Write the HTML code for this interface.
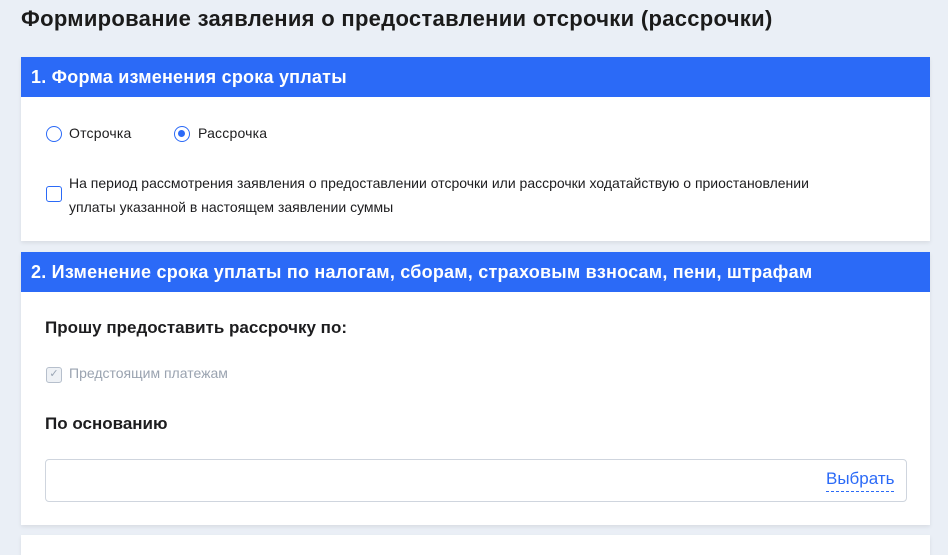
<!DOCTYPE html>
<html><head><meta charset="utf-8"><style>
body{margin:0;width:948px;height:542px;overflow:hidden;background:#eaeff6;font-family:"Liberation Sans",sans-serif;color:#1d1d1f;position:relative}
.t{position:absolute;left:21px;top:6px;font-size:22px;font-weight:bold;letter-spacing:0.3px;color:#1b1b1b}
.card{position:absolute;left:21px;width:909px;background:#fff;box-shadow:0 2px 4px rgba(0,0,0,0.08)}
.hd{background:#2b6af7;color:#fff;font-weight:bold;font-size:18px;height:40px;line-height:40px;padding-left:10px;letter-spacing:0.22px}
.a{position:absolute;font-size:14px}
.r{position:absolute;border:1.5px solid #2b6af7;border-radius:50%;box-sizing:border-box;width:16px;height:16px}
.cb{position:absolute;width:16px;height:16px;border:1.5px solid #2b6af7;border-radius:3px;box-sizing:border-box}
</style></head><body>
<div class="t">Формирование заявления о предоставлении отсрочки (рассрочки)</div>
<div class="card" style="top:57px;height:184px">
<div class="hd">1. Форма изменения срока уплаты</div>
<div class="r" style="left:25px;top:69px"></div>
<div class="a" style="left:48px;top:68px;letter-spacing:0.2px">Отсрочка</div>
<div class="r" style="left:153px;top:69px"><div style="position:absolute;left:3px;top:3px;width:7px;height:7px;border-radius:50%;background:#2b6af7"></div></div>
<div class="a" style="left:177px;top:68px;letter-spacing:0.2px">Рассрочка</div>
<div class="cb" style="left:25px;top:129px"></div>
<div class="a" style="left:48px;top:114px;font-size:14px;line-height:24px;width:785px">На период рассмотрения заявления о предоставлении отсрочки или рассрочки ходатайствую о приостановлении уплаты указанной в настоящем заявлении суммы</div>
</div>
<div class="card" style="top:252px;height:273px">
<div class="hd">2. Изменение срока уплаты по налогам, сборам, страховым взносам, пени, штрафам</div>
<div class="a" style="left:24px;top:66px;font-size:17px;font-weight:bold">Прошу предоставить рассрочку по:</div>
<div class="cb" style="left:25px;top:115px;border-color:#b6bfcc;background:#eef1f5;color:#9aa5b4;font-size:11px;line-height:12px;text-align:center">✓</div>
<div class="a" style="left:48px;top:113px;color:#9aa3b0">Предстоящим платежам</div>
<div class="a" style="left:24px;top:162px;font-size:17px;font-weight:bold">По основанию</div>
<div style="position:absolute;left:24px;top:207px;width:860px;height:41px;border:1px solid #cfd5de;border-radius:4px"></div>
<div class="a" style="left:805px;top:217px;font-size:17px;color:#2b6af7;border-bottom:1.5px dashed #2b6af7;padding-bottom:2px">Выбрать</div>
</div>
<div class="card" style="top:535px;height:20px"></div>
</body></html>
